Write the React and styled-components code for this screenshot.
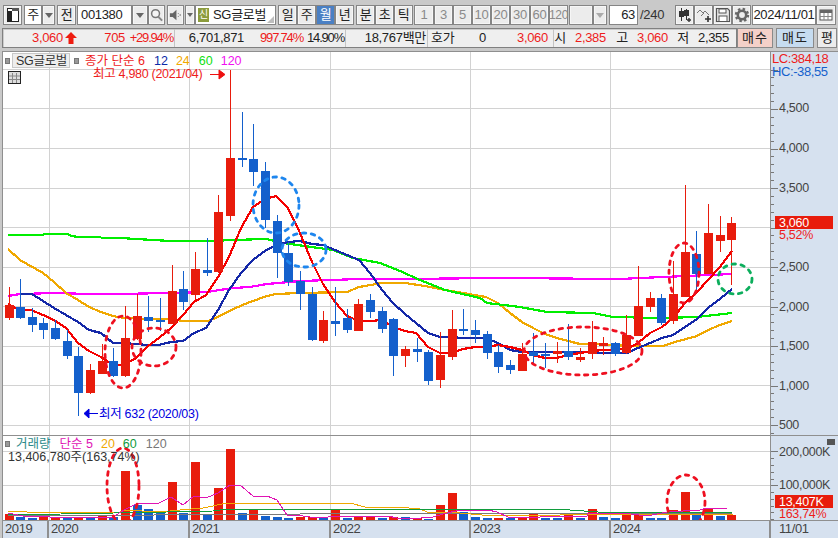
import React from "react";
import styled, { createGlobalStyle } from "styled-components";

const FONT = `"Liberation Sans", "Noto Sans CJK KR", sans-serif`;

const Global = createGlobalStyle`
  html, body { margin: 0; padding: 0; background: #c9c9c9; }
  * { box-sizing: border-box; }
`;

const Page = styled.div`
  width: 838px; height: 538px; overflow: hidden; background: #c9c9c9;
  display: flex; flex-direction: column;
  font: 13px/16px ${FONT}; color: #222; letter-spacing: -0.3px;
`;
const Toolbar = styled.div`
  display: flex; align-items: stretch; height: 20px; margin: 5px 0 0 3px;
`;
const Btn = styled.div`
  width: ${p => p.$w || 19}px; height: 20px; flex: none;
  margin-left: ${p => p.$gap || 0}px;
  display: flex; align-items: center; justify-content: ${p => p.$end ? "flex-end" : p.$start ? "flex-start" : "center"};
  padding-right: ${p => p.$end ? 2 : 0}px;
  background: ${p => p.$on ? "#4a80c4" : p.$white ? "#fff" : "#ececec"};
  color: ${p => p.$on ? "#fff" : p.$off ? "#8a8a8a" : "#222"};
  border: 1px solid #858585;
  box-shadow: inset 0 0 0 1px ${p => p.$on ? "#4a80c4" : p.$white ? "#fff" : "#f6f6f6"};
  font-size: ${p => p.$fs || 13}px; line-height: 16px;
`;
const Caret = styled.span`
  width: 0; height: 0;
  border-left: ${p => p.$s || 4}px solid transparent; border-right: ${p => p.$s || 4}px solid transparent;
  border-top: ${p => (p.$s || 4) + 1}px solid ${p => p.$c || "#666"};
`;
const CodeText = styled.span`
  flex: 1; padding-left: 3px; font-size: 13px; letter-spacing: -0.35px;
`;
const NameBox = styled.div`
  width: 81px; height: 20px; flex: none; position: relative;
  display: flex; align-items: center; gap: 4px; padding-left: 2px;
  background: #fff; border: 1px solid #858585;
`;
const NewTag = styled.span`
  width: 11px; height: 14px; background: #8c9c3c; color: #fff; font-size: 10px;
  display: flex; align-items: center; justify-content: center; flex: none; letter-spacing: 0;
`;
const Corner = styled.span`
  position: absolute; right: 1px; bottom: 1px; width: 0; height: 0;
  border-left: 7px solid transparent; border-bottom: 7px solid #bdbdbd;
`;
const Slash = styled.span`
  width: 37px; flex: none; padding-left: 2px; color: #333; align-self: center;
`;
const InfoBar = styled.div`
  display: flex; height: 20px; margin: 3px 0 0 2px;
`;
const InfoBox = styled.div`
  display: flex; width: 735px; flex: none; background: #efefef; border: 1px solid #808080;
  box-shadow: inset 1px 1px 0 #ccc;
`;
const Seg = styled.div`
  width: ${p => p.$w}px; flex: none; display: flex; align-items: center;
  border-right: ${p => p.$last ? "none" : "1px solid #c4c4c4"};
`;
const Val = styled.span`
  width: ${p => p.$w}px; flex: none; text-align: ${p => p.$left ? "left" : "right"};
  color: ${p => p.$red ? "#ee1c1c" : "#222"}; white-space: nowrap; padding-left: ${p => p.$pl || 0}px;
  letter-spacing: ${p => p.$tight ? "-1.2px" : "inherit"};
`;
const Trade = styled.div`
  width: ${p => p.$w}px; height: 20px; margin-left: ${p => p.$gap}px; flex: none;
  display: flex; align-items: center; justify-content: center;
  background: ${p => p.$bg}; border: 1px solid #8a8a8a; font-size: 13px;
  letter-spacing: ${p => p.$ls || 0}px;
`;
const Frame = styled.div`
  flex: 1; margin: 3px 0 0 2px; display: flex; flex-direction: column;
  border-top: 1px solid #8f8f8f; border-left: 1px solid #8f8f8f; min-height: 0;
`;
const Pane = styled.div`
  display: flex; height: ${p => p.$h}px; flex: none;
  border-bottom: ${p => p.$line ? "1px solid #8f8f8f" : "none"};
`;
const Plot = styled.div`
  width: 768px; height: 100%; flex: none; background: #fff; position: relative;
  border-right: 1px solid #8f8f8f; overflow: hidden;
  & > svg { display: block; }
`;
const Scale = styled.div`
  flex: 1; background: #d6e1ef; position: relative; overflow: hidden;
  & > svg { display: block; }
`;
const Legend = styled.div`
  position: absolute; left: ${p => p.$x}px; top: ${p => p.$y}px;
  display: flex; align-items: center; white-space: nowrap; font-size: 12.5px; line-height: 12px;
`;
const Tag = styled.span`
  color: ${p => p.$c}; margin-left: ${p => p.$ml || 0}px; letter-spacing: 0;
`;
const Square = styled.i`
  width: 5px; height: 6px; flex: none; background: #999; border: 1px solid #777;
  margin: 0 ${p => p.$mr || 0}px 0 ${p => p.$ml || 0}px;
`;
const Stock = styled.span`
  height: 15px; padding: 0 2px 0 3px; background: #eee; border: 1px solid #c8c8c8;
  color: #333; display: flex; align-items: center; font-size: 12.5px; margin: 0 4px 0 2px;
`;
const Corners = styled.div`
  position: absolute; left: 4px; top: 18px; line-height: 0;
`;
const Metric = styled.div`
  position: absolute; left: 1px; top: ${p => p.$y}px; color: ${p => p.$c};
  font-size: 13px; line-height: 12px; letter-spacing: -0.4px;
`;
const Dates = styled.div`
  display: flex; height: 18px; flex: none; background: #d6e1ef; color: #444;
  border-top: 1px solid #8f8f8f; font-size: 13px;
`;
const DateCell = styled.div`
  width: ${p => p.$w}px; flex: none; padding-left: 2px; line-height: 16px;
  border-right: 2px solid #8f8f8f; letter-spacing: -0.4px;
`;
const LastDate = styled.div`
  flex: 1; padding-left: 8px; line-height: 16px; letter-spacing: -0.4px;
`;
const MiniClose = styled.span`
  position: absolute; right: 3px; top: 3px; width: 8px; height: 6px; background: #555;
`;

const RED = "#e81c0c", BLUE = "#1460cc";
const X = i => 8.5 + i * 11.66;
// [color, wick top, body top, body bottom, wick bottom]
const C = [
  ["r",287,305,318,320],["b",279,307,318,319],["b",308,317,325,332],["b",318,323,330,339],["b",320,328,339,340],
  ["b",330,341,356,359],["b",347,356,393,416],["r",364,370,393,394],["r",344,361,374,374],["b",348,361,376,377],
  ["r",306,338,376,377],["r",294,316,339,340],["b",296,317,321,332],["b",298,320,322,331],["r",265,291,324,324],
  ["b",271,289,302,310],["r",252,269,295,300],["b",238,270,273,276],["r",195,212,272,273],["r",70,158,216,221],
  ["b",112,158,160,167],["b",124,159,172,186],["b",162,171,220,228],["b",215,221,253,278],["b",242,253,282,286],
  ["b",271,281,294,310],["b",287,294,340,341],["r",311,320,341,343],["b",287,321,324,336],["b",309,318,330,333],
  ["r",299,304,331,331],["b",294,300,312,318],["b",307,311,329,333],["b",318,319,356,376],["r",346,349,356,367],
  ["b",338,349,352,362],["b",350,352,381,385],["r",332,355,380,388],["r",310,329,357,360],["b",309,329,331,335],
  ["b",320,330,335,343],["b",331,334,353,359],["b",345,352,367,373],["b",360,365,370,374],["r",343,354,371,371],
  ["b",333,352,356,365],["b",343,354,356,368],["r",342,351,354,363],["b",324,351,357,360],["r",348,357,360,362],
  ["r",321,342,354,359],["r",337,343,346,355],["b",342,343,354,356],["r",315,335,353,354],["r",266,306,336,336],
  ["r",292,298,307,312],["b",294,298,323,325],["r",261,294,321,324],["r",185,252,297,297],["b",231,254,274,290],
  ["r",204,233,274,274],["r",216,235,241,252],["r",217,223,240,285],
];
const MA = [
  ["#ff00ff", "8,296 20,294 55,293 90,294 120,294 167,293 207,292 233,288 250,287 267,284 300,281 360,279 400,279 500,278 620,279 640,278 732,274"],
  ["#f0a800", "8,249 20,260 43,273 54,282 66,293 78,300 89,307 101,312 113,316 124,318 148,319 171,319 183,321 208,321 218,317 233,309 250,302 267,296 276,294 300,293 347,292 359,287 382,283 405,283 425,286 445,290 463,293 486,297 498,303 510,313 522,322 533,328 545,334 557,338 568,341 580,344 592,344 615,345 627,346 663,346 675,342 697,336 708,330 720,325 732,321"],
  ["#00ee00", "8,235 43,235 44,234 67,234 72,236 78,237 100,237 102,238 120,238 170,241 210,241 233,240 266,239 283,243 333,250 353,258 380,263 400,271 420,280 445,290 480,298 487,303 520,307 547,312 593,313 613,317 663,318 697,317 732,313"],
  ["#1428a8", "20,294 32,294 43,301 54,308 66,315 78,322 89,330 101,333 113,343 124,343 136,344 148,345 159,345 171,342 183,341 194,333 206,328 218,310 229,290 241,273 253,260 265,251 276,245 288,242 300,241 312,244 323,245 335,250 347,255 359,260 370,273 382,290 393,303 405,314 416,323 428,333 440,337 451,337 463,338 486,338 498,343 510,350 522,352 557,352 592,352 603,353 627,353 638,348 650,343 662,338 673,335 685,327 697,319 708,308 720,299 732,289"],
  ["#f40000", "8,304 19,310 31,310 43,315 54,320 66,328 78,343 89,351 101,357 113,365 124,365 136,358 148,346 159,338 171,328 183,315 194,302 206,295 218,277 229,257 241,228 253,207 265,199 276,196 288,208 300,233 312,262 323,284 335,302 347,316 359,321 370,321 382,320 393,327 405,331 416,333 428,347 440,353 451,353 463,349 475,347 486,347 498,345 510,347 522,350 533,355 545,358 557,358 568,355 580,353 592,351 603,350 627,349 638,343 650,333 662,327 673,318 685,303 697,292 708,280 720,267 732,251"],
];
const RINGS = [
  ["#ee1020", 123, 352, 18, 36], ["#ee1020", 154, 347, 22, 19],
  ["#1e86ee", 276, 205, 23, 28], ["#1e86ee", 304, 250, 22, 17],
  ["#ee1020", 583, 351, 59, 24], ["#ee1020", 684, 273, 15, 30],
  ["#0cae5c", 735, 279, 17, 15],
];
const V = [
  ["r",514],["b",517],["b",518],["r",517],["r",518],["b",518],["r",518],["b",518],["r",515],["b",517],["r",471],
  ["b",505],["b",509],["b",513],["r",482],["b",513],["r",462],["b",515],["r",488],["r",449],["b",513],["r",510],
  ["b",516],["b",517],["b",518],["r",517],["r",517],["b",518],["r",509],["b",518],["r",517],["r",517],["b",518],
  ["r",517],["b",517],["r",518],["b",519],["r",505],["r",493],["b",512],["b",517],["b",518],["r",518],["b",518],
  ["r",517],["r",514],["b",518],["b",518],["r",514],["b",518],["r",509],["b",517],["b",518],["r",512],["r",512],
  ["b",518],["b",518],["r",510],["r",492],["b",515],["r",509],["b",516],["r",515],
];
const VOL_MA = [
  ["#7a7a7a", "8,516 300,514 732,513"],
  ["#f0a800", "8,511 27,512 120,512 124,510 160,512 180,510 203,508 227,503 350,503 365,507 397,507 420,509 427,512 460,513 482,515 560,515 733,514"],
  ["#109c3c", "8,515 167,512 213,511 227,509 300,509 570,510 598,512 732,512"],
  ["#e014b4", "8,513 23,516 50,517 113,517 124,510 136,504 159,503 171,497 183,505 194,496 206,498 218,493 230,485 240,485 253,496 267,496 277,500 287,515 303,516 310,517 328,517 330,516 388,516 397,518 410,519 433,517 443,514 460,510 488,510 497,512 508,517 518,518 563,516 587,516 588,513 623,513 647,516 667,512 700,510 707,508 727,509"],
];
const VGRID = [49.5, 189.5, 330.5, 470.5, 610.5];
const HGRID = [69.5, 108.5, 148.5, 188.5, 227.5, 267.5, 306.5, 346.5, 385.5, 425.5];
const PRICE = [[108,"4,500"],[148,"4,000"],[188,"3,500"],[267,"2,500"],[307,"2,000"],[346,"1,500"],[386,"1,000"],[425,"500"]];
const PERIODS = [["1",20],["3",19],["5",19],["10",19],["20",19],["30",20],["60",19],["120",19]];

const T = styled.text`
  font: 12.5px ${FONT}; letter-spacing: -0.3px;
`;
const Ring = ({ c = "#ee1020", x, y, rx, ry }) => (
  <ellipse cx={x} cy={y} rx={rx} ry={ry} fill="none" stroke={c} strokeWidth="2.8"
    strokeLinecap="round" strokeDasharray="3.5 5.5" />
);

const PricePlot = () => (
  <svg width="767" height="383" viewBox="3 52 767 383">
    {HGRID.map(y => <line key={y} x1="3" x2="770" y1={y} y2={y} stroke="#d2d2d2" />)}
    {VGRID.map(x => <line key={x} x1={x} x2={x} y1="52" y2="435" stroke="#d2d2d2" />)}
    {MA.map(([c, p]) => <polyline key={c} points={p} fill="none" stroke={c} strokeWidth="2.2" shapeRendering="crispEdges" />)}
    <g shapeRendering="crispEdges">
      {C.map(([k, a, b, d, e], i) => {
        const col = k === "r" ? RED : BLUE, cx = Math.round(X(i));
        return (
          <g key={i}>
            <rect x={cx} y={a} width="1" height={e - a} fill={col} />
            <rect x={cx - 4} y={b} width="9" height={Math.max(d - b, 2)} fill={col} />
          </g>
        );
      })}
    </g>
    {RINGS.map(([c, x, y, rx, ry], i) => <Ring key={i} c={c} x={x} y={y} rx={rx} ry={ry} />)}
    <T x="93" y="78" fill="#ee1c1c">최고 4,980 (2021/04)</T>
    <path d="M210 74.5h9M219 70l6 4.5-6 4.5z" fill="#ee1010" stroke="#ee1010" />
    <path d="M98 413.5h-9M89 409l-5 4.5 5 4.5z" fill="#0000e0" stroke="#0000e0" />
    <T x="99" y="418" fill="#0000e0">최저 632 (2020/03)</T>
  </svg>
);

const priceTicks = [];
for (let n = 0; n < 47; n++) priceTicks.push([Math.round(69.5 + n * 7.9) + 0.5, n % 5 === 0]);

const PriceScale = () => (
  <svg width="66" height="383" viewBox="771 52 66 383">
    {priceTicks.map(([y, big]) => <line key={y} x1="771" x2={big ? 778 : 774} y1={y} y2={y} stroke="#777" />)}
    {PRICE.map(([y, t]) => <T key={t} x="779" y={y + 4} fill="#444">{t}</T>)}
    <rect x="775" y="216" width="58" height="13" fill={RED} />
    <T x="779" y="226.5" fill="#fff">3,060</T>
    <T x="779" y="239" fill="#ee1c1c">5,52%</T>
  </svg>
);

const volTicks = [[451.5, 1], [485.5, 1], [458.5], [465.5], [472.5], [479.5], [492.5], [499.5], [506.5], [512.5], [519.5]];
const VolScale = () => (
  <svg width="66" height="84" viewBox="771 436 66 84">
    {volTicks.map(([y, big]) => <line key={y} x1="771" x2={big ? 778 : 774} y1={y} y2={y} stroke="#777" />)}
    <T x="779" y="456" fill="#444">200,000K</T>
    <T x="779" y="489" fill="#444">100,000K</T>
    <rect x="775" y="495" width="58" height="13" fill={RED} />
    <T x="779" y="506" fill="#fff">13,407K</T>
    <T x="779" y="518" fill="#ee1c1c">163,74%</T>
  </svg>
);

const VolPlot = () => (
  <svg width="767" height="84" viewBox="3 436 767 84">
    {[451.5, 485.5].map(y => <line key={y} x1="3" x2="770" y1={y} y2={y} stroke="#d2d2d2" />)}
    {VGRID.map(x => <line key={x} x1={x} x2={x} y1="436" y2="520" stroke="#d2d2d2" />)}
    <g shapeRendering="crispEdges">
      {V.map(([k, y], i) => <rect key={i} x={Math.round(X(i)) - 4} y={y} width="9" height={520 - y} fill={k === "r" ? RED : BLUE} />)}
    </g>
    {VOL_MA.map(([c, p]) => <polyline key={c} points={p} fill="none" stroke={c} strokeWidth="1" shapeRendering="crispEdges" />)}
    <Ring x={123} y={486} rx={16} ry={38} />
    <Ring x={686} y={502} rx={19} ry={27} />
  </svg>
);

const I = ({ children, w = 16, h = 16 }) => <svg width={w} height={h} viewBox={`0 0 ${w} ${h}`}>{children}</svg>;

export default function App() {
  return (
    <Page>
      <Global />
      <Toolbar>
        <Btn $w={19}>
          <I><rect x="2.5" y="1.5" width="11" height="13" fill="#fff" stroke="#222" /><rect x="2" y="4" width="5" height="10" fill="#222" /><rect x="7" y="1" width="7" height="3" fill="#555" /></I>
        </Btn>
        <Btn $w={18} $gap={2} $white>주</Btn>
        <Btn $w={13}><Caret /></Btn>
        <Btn $w={19} $gap={2}>전</Btn>
        <Btn $w={55} $gap={1} $white $start><CodeText>001380</CodeText></Btn>
        <Btn $w={16}><Caret /></Btn>
        <Btn $w={17}>
          <I><circle cx="7" cy="6.5" r="4.2" fill="#f4f4f4" stroke="#777" strokeWidth="1.6" /><path d="M10 10l4 4" stroke="#888" strokeWidth="2.2" /></I>
        </Btn>
        <Btn $w={17} $gap={2}>
          <I><path d="M2 6h3l4-3.5v11L5 10H2z" fill="#666" /><path d="M11 6v1M11 9v1M13 7v2" stroke="#777" /></I>
        </Btn>
        <Btn $w={10} $gap={1}><Caret $s={3} /></Btn>
        <NameBox><NewTag>신</NewTag>SG글로벌<Corner /></NameBox>
        <Btn $gap={2}>일</Btn><Btn>주</Btn><Btn $on>월</Btn><Btn>년</Btn>
        <Btn $gap={2}>분</Btn><Btn>초</Btn><Btn>틱</Btn>
        {PERIODS.map(([t, w], i) => <Btn key={t} $w={w} $gap={i === 0 ? 1 : 0} $off $fs={t.length > 2 ? 12 : 13}>{t}</Btn>)}
        <Btn $w={24} $gap={1} />
        <Btn $w={14}><Caret $c="#aaa" /></Btn>
        <Btn $w={29} $gap={2} $white $end>63</Btn>
        <Slash>/240</Slash>
        <Btn>
          <I><path d="M4.5 1v13M9.5 2v11" stroke="#333" /><rect x="2" y="4" width="5" height="6" fill="#333" /><rect x="7" y="3" width="5" height="6" fill="#333" /><path d="M12 11v4M10 13h4" stroke="#333" strokeWidth="1.4" /></I>
        </Btn>
        <Btn>
          <I><path d="M1 6l3-3 3 3 2-2 4 4M5 9l3-3" fill="none" stroke="#777" /><path d="M12 9v6M9 12h6" stroke="#333" strokeWidth="1.6" /></I>
        </Btn>
        <Btn>
          <I><path d="M1.5 1.5h11l2 2v11h-13z" fill="#e8e8e8" stroke="#555" strokeWidth="1.2" /><rect x="4" y="2" width="7" height="4" fill="#fff" stroke="#555" /><rect x="4" y="9" width="8" height="5.5" fill="#fff" stroke="#555" /></I>
        </Btn>
        <Btn>
          <I><circle cx="8" cy="8" r="4.2" fill="none" stroke="#666" strokeWidth="2.6" /><circle cx="8" cy="8" r="6" fill="none" stroke="#666" strokeWidth="2.4" strokeDasharray="2.4 2.3" /></I>
        </Btn>
        <Btn $w={64} $gap={1} $white>2024/11/01</Btn>
        <Btn $w={20}>
          <I><rect x="2" y="3" width="12" height="10" fill="#fff" stroke="#555" /><rect x="2" y="3" width="12" height="3" fill="#666" /><path d="M6 6v7M10 6v7M2 9.5h12" stroke="#888" /></I>
        </Btn>
      </Toolbar>

      <InfoBar>
        <InfoBox>
          <Seg $w={172}>
            <Val $w={60} $red>3,060</Val>
            <I w={15} h={14}><path d="M7 1l6 6H9.5v6h-5V7H1z" fill="#ee1c10" transform="translate(1 0)" /></I>
            <Val $w={47} $red>705</Val>
            <Val $w={48} $red $tight>+29.94%</Val>
          </Seg>
          <Seg $w={171}>
            <Val $w={69}>6,701,871</Val>
            <Val $w={59} $red $tight>997.74%</Val>
            <Val $w={41} $tight>14.90%</Val>
          </Seg>
          <Seg $w={82}><Val $w={80}>18,767백만</Val></Seg>
          <Seg $w={126}>
            <Val $w={30} $left $pl={3}>호가</Val>
            <Val $w={28}>0</Val>
            <Val $w={62} $red>3,060</Val>
          </Seg>
          <Seg $w={182} $last>
            <Val $w={12}>시</Val>
            <Val $w={40} $red>2,385</Val>
            <Val $w={22}>고</Val>
            <Val $w={40} $red>3,060</Val>
            <Val $w={21}>저</Val>
            <Val $w={40}>2,355</Val>
          </Seg>
        </InfoBox>
        <Trade $w={36} $gap={0} $bg="#f4d0c8" $ls={1}>매수</Trade>
        <Trade $w={38} $gap={3} $bg="#c6dcf0" $ls={1}>매도</Trade>
        <Trade $w={20} $gap={3} $bg="#ececec">평</Trade>
      </InfoBar>

      <Frame>
        <Pane $h={384} $line>
          <Plot>
            <PricePlot />
            <Legend $x={2} $y={1}>
              <Square />
              <Stock>SG글로벌</Stock>
              <Square $mr={6} />
              <Tag $c="#ee1c1c">종가 단순 6</Tag>
              <Tag $c="#0a2aa8" $ml={9}>12</Tag>
              <Tag $c="#f0a800" $ml={8}>24</Tag>
              <Tag $c="#10e010" $ml={9}>60</Tag>
              <Tag $c="#f010f0" $ml={8}>120</Tag>
            </Legend>
            <Corners>
              <I w={15} h={15}><rect x="1.5" y="1.5" width="12" height="12" fill="#ddd" stroke="#222" /><path d="M5.5 3v10M9.5 3v10M2 6h11M2 9.5h11" stroke="#888" /></I>
            </Corners>
          </Plot>
          <Scale>
            <PriceScale />
            <Metric $y={1} $c="#ee1c1c">LC:384,18</Metric>
            <Metric $y={14} $c="#1460cc">HC:-38,55</Metric>
          </Scale>
        </Pane>
        <Pane $h={84}>
          <Plot>
            <VolPlot />
            <Legend $x={2} $y={2}>
              <Square $mr={6} />
              <Tag $c="#2a8a8a">거래량</Tag>
              <Tag $c="#e014b4" $ml={9}>단순 5</Tag>
              <Tag $c="#f0a800" $ml={8}>20</Tag>
              <Tag $c="#109c3c" $ml={8}>60</Tag>
              <Tag $c="#777" $ml={9}>120</Tag>
            </Legend>
            <Legend $x={5} $y={15}><Tag $c="#333">13,406,780주(163,74%)</Tag></Legend>
          </Plot>
          <Scale>
            <VolScale />
            <MiniClose />
          </Scale>
        </Pane>
        <Dates>
          <DateCell $w={46}>2019</DateCell>
          <DateCell $w={141}>2020</DateCell>
          <DateCell $w={141}>2021</DateCell>
          <DateCell $w={140}>2022</DateCell>
          <DateCell $w={140}>2023</DateCell>
          <DateCell $w={160}>2024</DateCell>
          <LastDate>11/01</LastDate>
        </Dates>
      </Frame>
    </Page>
  );
}
